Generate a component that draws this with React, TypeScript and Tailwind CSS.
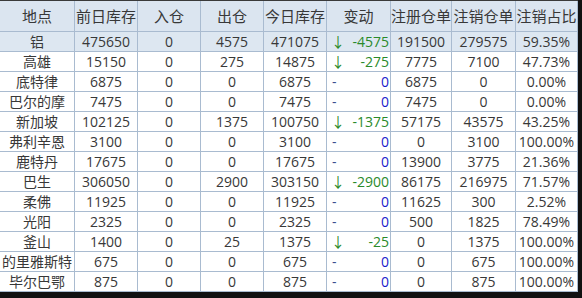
import React from 'react';

type Row = {
  name: string;
  prev: string;
  inQty: string;
  outQty: string;
  today: string;
  change: number;
  reg: string;
  cancel: string;
  ratio: string;
};

const rows: Row[] = [
  { name: '铝', prev: '475650', inQty: '0', outQty: '4575', today: '471075', change: -4575, reg: '191500', cancel: '279575', ratio: '59.35%' },
  { name: '高雄', prev: '15150', inQty: '0', outQty: '275', today: '14875', change: -275, reg: '7775', cancel: '7100', ratio: '47.73%' },
  { name: '底特律', prev: '6875', inQty: '0', outQty: '0', today: '6875', change: 0, reg: '6875', cancel: '0', ratio: '0.00%' },
  { name: '巴尔的摩', prev: '7475', inQty: '0', outQty: '0', today: '7475', change: 0, reg: '7475', cancel: '0', ratio: '0.00%' },
  { name: '新加坡', prev: '102125', inQty: '0', outQty: '1375', today: '100750', change: -1375, reg: '57175', cancel: '43575', ratio: '43.25%' },
  { name: '弗利辛恩', prev: '3100', inQty: '0', outQty: '0', today: '3100', change: 0, reg: '0', cancel: '3100', ratio: '100.00%' },
  { name: '鹿特丹', prev: '17675', inQty: '0', outQty: '0', today: '17675', change: 0, reg: '13900', cancel: '3775', ratio: '21.36%' },
  { name: '巴生', prev: '306050', inQty: '0', outQty: '2900', today: '303150', change: -2900, reg: '86175', cancel: '216975', ratio: '71.57%' },
  { name: '柔佛', prev: '11925', inQty: '0', outQty: '0', today: '11925', change: 0, reg: '11625', cancel: '300', ratio: '2.52%' },
  { name: '光阳', prev: '2325', inQty: '0', outQty: '0', today: '2325', change: 0, reg: '500', cancel: '1825', ratio: '78.49%' },
  { name: '釜山', prev: '1400', inQty: '0', outQty: '25', today: '1375', change: -25, reg: '0', cancel: '1375', ratio: '100.00%' },
  { name: '的里雅斯特', prev: '675', inQty: '0', outQty: '0', today: '675', change: 0, reg: '0', cancel: '675', ratio: '100.00%' },
  { name: '毕尔巴鄂', prev: '875', inQty: '0', outQty: '0', today: '875', change: 0, reg: '0', cancel: '875', ratio: '100.00%' },
];

const headers = ['地点', '前日库存', '入仓', '出仓', '今日库存', '变动', '注册仓单', '注销仓单', '注销占比'];

const grid = 'grid grid-cols-[75px_63px_63px_63px_63px_64px_61px_64px_62px]';
const cell = 'flex items-center justify-center border-r border-b border-[#a9bbd0] whitespace-nowrap overflow-hidden';

export default function App() {
  return (
    <div
      className="w-[582px] h-[298px] bg-[#111] overflow-hidden text-[#383838]"
      style={{ fontFamily: '"Open Sans", "Noto Sans CJK SC", sans-serif' }}
    >
      <div className="w-[578px] bg-white border-t border-[#3a3a3a]">
        <div className={`${grid} h-[31px] bg-[#dbe5f0] text-[15px]`}>
          {headers.map((h) => (
            <div key={h} className={cell}>{h}</div>
          ))}
        </div>
        {rows.map((r, i) => (
          <div key={r.name} className={`${grid} h-[20px] text-[14px] leading-none ${i === 0 ? 'bg-[#dde7f1]' : 'bg-white'}`}>
            <div className={cell}>{r.name}</div>
            <div className={cell}>{r.prev}</div>
            <div className={cell}>{r.inQty}</div>
            <div className={cell}>{r.outQty}</div>
            <div className={cell}>{r.today}</div>
            <div className={`${cell} !justify-between pl-1 pr-px`}>
              {r.change < 0 ? (
                <>
                  <span className="text-[#2a8a2a]">↓</span>
                  <span className="text-[#2a8a2a]">{r.change}</span>
                </>
              ) : (
                <>
                  <span className="text-[#3a4f8f] pl-px">-</span>
                  <span className="text-[#1a1acc]">0</span>
                </>
              )}
            </div>
            <div className={cell}>{r.reg}</div>
            <div className={cell}>{r.cancel}</div>
            <div className={cell}>{r.ratio}</div>
          </div>
        ))}
      </div>
    </div>
  );
}
